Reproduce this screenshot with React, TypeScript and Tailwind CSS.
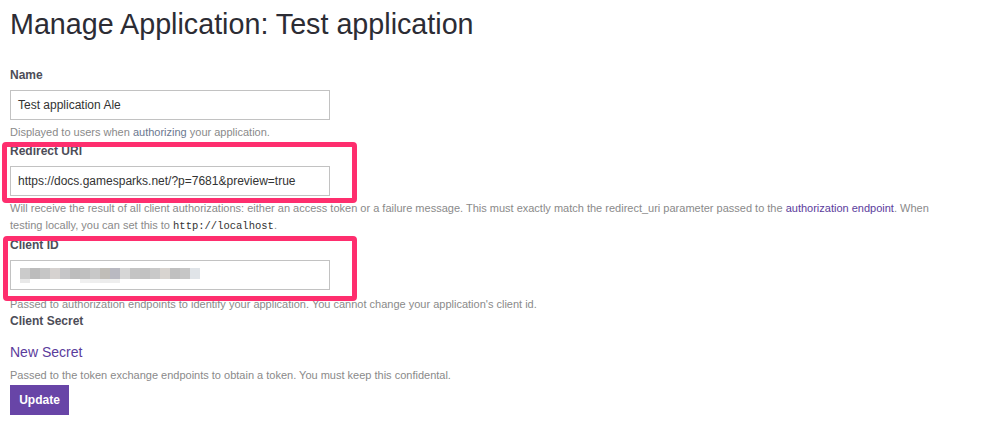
import React from 'react';

const blur = [
  '#cbcbcb', '#bcbcbc', '#c6c6c6', '#d6d2d0', '#c6c6c8', '#bdbdbd', '#c0c0c0', '#c8c8c8', '#c0bdb8',
  '#b9b9c1', '#d6d6d6', '#c4c4c4', '#c2c2c2', '#c9c9c9', '#d8d4d0', '#c0c0c0', '#c6c6c6', '#e0e4e8',
];
const blurLow = ['#e8e8e8', '#ffffff', '#ffffff', '#ffffff', '#ffffff', '#ffffff', '#f0f0f0', '#eeeeee', '#ececec', '#eeeeee'];

function Label({ children }: { children: React.ReactNode }) {
  return <div className="text-[12px] leading-[17px] font-bold text-[#4d4d58] mb-[6px]">{children}</div>;
}

function Help({ children, className = 'mt-[4px]' }: { children: React.ReactNode; className?: string }) {
  return <div className={`${className} text-[11px] leading-[17px] text-[#8a8a8a]`}>{children}</div>;
}

function Field({ value }: { value: string }) {
  return (
    <div className="w-[320px] h-[30px] border border-[#c2c2c2] bg-white px-[7px] flex items-center text-[12px] text-[#333]">
      {value}
    </div>
  );
}

export default function App() {
  return (
    <div className="min-h-screen bg-white pl-[10px] pt-[8px]" style={{ fontFamily: '"Liberation Sans", Arial, sans-serif' }}>
      <h1 className="text-[28.7px] leading-[32px] text-[#2c2c34] font-normal">Manage Application: Test application</h1>

      {/* Name */}
      <div className="mt-[27px]">
        <Label>Name</Label>
        <Field value="Test application Ale" />
        <Help>
          Displayed to users when <span className="text-[#6b7890]">authorizing</span> your application.
        </Help>
      </div>

      {/* Redirect URI */}
      <div className="relative mt-[2px]">
        <Label>Redirect URI</Label>
        <Field value="https://docs.gamesparks.net/?p=7681&preview=true" />
        <Help>
          Will receive the result of all client authorizations: either an access token or a failure message. This must exactly match the redirect_uri parameter passed to the{' '}
          <span className="text-[#5b3c9c]">authorization endpoint</span>. When
          <br />
          testing locally, you can set this to{' '}
          <code className="text-[10.5px] text-[#333]" style={{ fontFamily: '"Liberation Mono", "Courier New", monospace' }}>http://localhost</code>.
        </Help>
        <div className="absolute top-[-1px] left-[-8px] w-[355px] h-[61px] border-[5px] border-[#fe2e6e] rounded-[4px] pointer-events-none" />
      </div>

      {/* Client ID */}
      <div className="relative mt-[2px]">
        <Label>Client ID</Label>
        <div className="w-[320px] h-[30px] border border-[#c2c2c2] bg-white pl-[9px] flex flex-col justify-center">
          <div className="flex">
            {blur.map((c, i) => (
              <div key={i} className="w-[10px] h-[11px]" style={{ backgroundColor: c }} />
            ))}
          </div>
          <div className="flex">
            {blurLow.map((c, i) => (
              <div key={i} className="w-[10px] h-[4px]" style={{ backgroundColor: c }} />
            ))}
          </div>
        </div>
        <Help className="mt-[6px]">
          Passed to authorization endpoints to identify your application. You cannot change your application's client id.
        </Help>
        <div className="absolute top-[-1px] left-[-7px] w-[354px] h-[65px] border-[5px] border-[#fe2e6e] rounded-[4px] pointer-events-none" />
      </div>

      {/* Client Secret */}
      <div>
        <div className="text-[12px] leading-[17px] font-bold text-[#4d4d58]">Client Secret</div>
        <div className="mt-[12px] text-[14px] leading-[20px] text-[#5b3c9c]">New Secret</div>
        <div className="mt-[5px] text-[11px] leading-[17px] text-[#8a8a8a]">
          Passed to the token exchange endpoints to obtain a token. You must keep this confidental.
        </div>
        <button className="mt-[1px] w-[59px] h-[30px] bg-[#6845a7] text-white text-[12px] font-bold flex items-center justify-center">
          Update
        </button>
      </div>
    </div>
  );
}
